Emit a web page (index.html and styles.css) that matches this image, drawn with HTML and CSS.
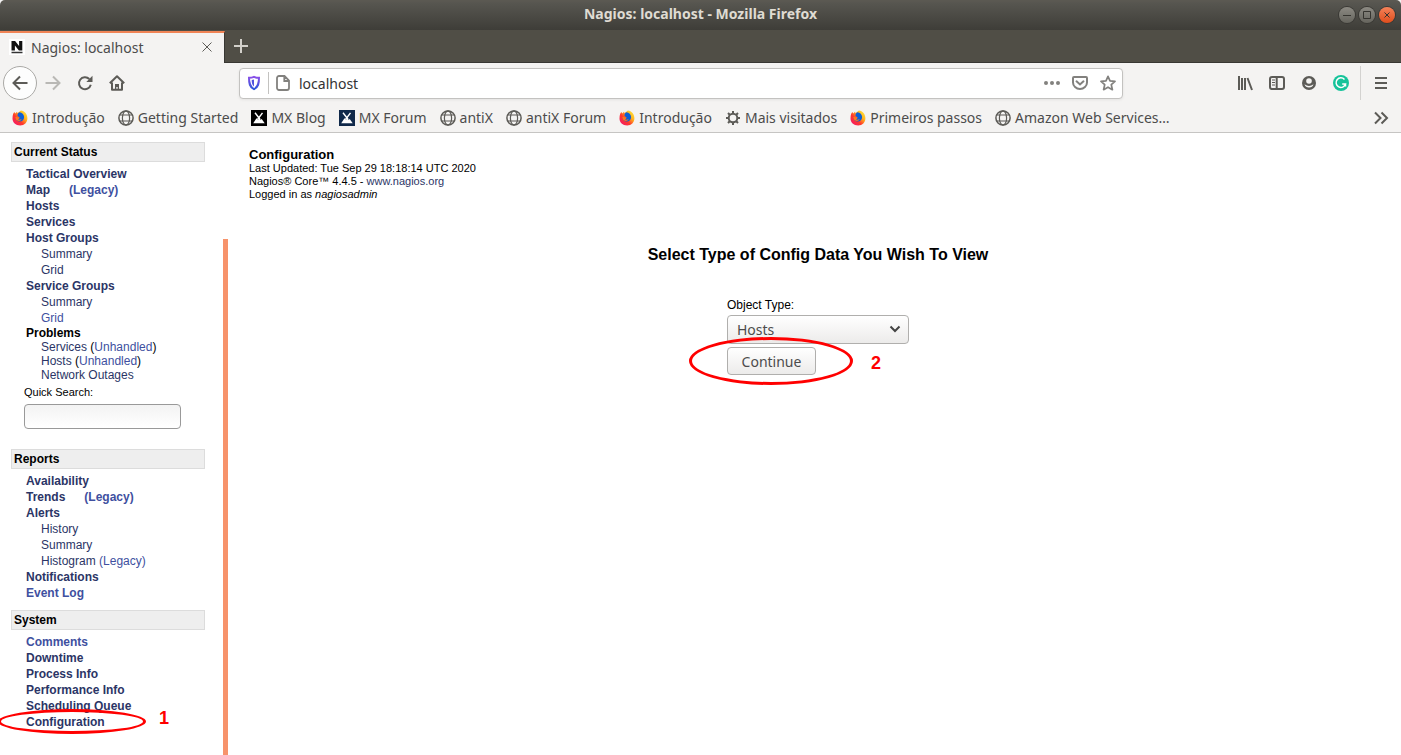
FILE: index.html
```html
<!DOCTYPE html>
<html lang="en">
<head>
<meta charset="utf-8">
<title>Nagios: localhost</title>
<link rel="stylesheet" href="styles.css">
</head>
<body>
<svg class="defs" aria-hidden="true">
  <defs>
    <linearGradient id="fox" x1="1" y1="0" x2="0" y2="1">
      <stop offset="0" stop-color="#fff04a"/><stop offset=".35" stop-color="#ffb21c"/><stop offset=".6" stop-color="#ff3a2b"/><stop offset="1" stop-color="#f0107a"/>
    </linearGradient>
    <linearGradient id="shield" x1="0" y1="0" x2="0" y2="1">
      <stop offset="0" stop-color="#8a4fe8"/><stop offset="1" stop-color="#2a56d8"/>
    </linearGradient>
    <symbol id="globe" viewBox="0 0 16 16">
      <g fill="none" stroke="#5c5b57" stroke-width="1.5"><circle cx="8" cy="8" r="7.1"/><ellipse cx="8" cy="8" rx="3.6" ry="7.1" stroke-width="1.2"/><path d="M1.8 5h12.4M1.8 11h12.4" stroke-width="1.2"/></g>
    </symbol>
    <symbol id="firefox" viewBox="0 0 16 16">
      <path d="M1.2 3.8 2.3 2l1 1.5L5 1.7l.6 1.5C6.7 2.3 8 1 9 .5c2.600.2 6.200 2.600 6.400 7.600.2 4.500-3.200 7.400-7.200 7.400C3.600 15.500.5 12.300.5 8.500c0-1.700.2-3.300.7-4.700z" fill="url(#fox)"/>
      <path d="M7.500 2.300c2.500.1 4.500 2 4.600 4.800.1 2.700-1.900 4.500-4.200 4.500-2.500 0-4.200-1.700-4.200-3.900l2.200.7 1.700-.9-2-1.600c-.3-1.500.4-3 1.900-3.600z" fill="#0b5fd6"/>
      <path d="M3.300 7.200c.9-.6 2-.4 2.500.2l1.900.3c-.2 1-1.300 1-1.700 1.600.9.9 2.600.3 3.700-.2-.7 2.200-4.200 2.800-5.700.5z" fill="#ff7a1a"/>
    </symbol>
    <symbol id="mx" viewBox="0 0 16 16">
      <path d="M4 2.800l5 6.500M11.500 2.800 6.500 9.500" fill="none" stroke="#fff" stroke-width="1.400"/><path d="M2.200 13.300 5.500 8.300l1.500 1.500L8.300 8.500l1.500 1.300.9-.8 3 4.300z" fill="#fff"/>
    </symbol>
  </defs>
</svg>
<header class="browser">
  <div class="titlebar">
    <span class="title">Nagios: localhost - Mozilla Firefox</span>
    <div class="window-buttons">
      <button class="wb" aria-label="Minimize"><svg viewBox="0 0 16 16"><path d="M4 8.500h8"/></svg></button>
      <button class="wb" aria-label="Maximize"><svg viewBox="0 0 16 16"><path d="M4.500 4.500h7v7h-7z"/></svg></button>
      <button class="wb wb-close" aria-label="Close"><svg viewBox="0 0 16 16"><path d="M5.500 5.500l5 5M10.500 5.500l-5 5"/></svg></button>
    </div>
  </div>
  <div class="tabs">
    <div class="tab">
      <svg class="i16" viewBox="0 0 16 16"><path fill="#fff" d="M0 0h16v16H0z"/><path d="M2.500 2h3.600l4 5V2h3.200v9.500h-3.400l-4-5v5H2.500z" fill="#111"/><path d="M2.500 13.500h11" stroke="#333" stroke-width="1.500"/></svg>
      <span class="tab-title">Nagios: localhost</span>
      <button class="plain" aria-label="Close tab"><svg class="i16 line thin" viewBox="0 0 16 16"><path d="M3.500 3.500l9 9M12.500 3.500l-9 9"/></svg></button>
    </div>
    <button class="plain new-tab" aria-label="New tab"><svg class="i16" viewBox="0 0 16 16"><path d="M8 1v14M1 8h14" stroke="#d2d0ca" stroke-width="2"/></svg></button>
  </div>
  <nav class="navbar" aria-label="Navigation">
    <button class="plain back" aria-label="Back"><svg class="i16 line" viewBox="0 0 16 16"><path d="M15.500 8H1.500M8 1.500 1.500 8 8 14.500"/></svg></button>
    <button class="plain" aria-label="Forward"><svg class="i16 line faded" viewBox="0 0 16 16"><path d="M.5 8h14M8 1.500 14.500 8 8 14.500"/></svg></button>
    <button class="plain" aria-label="Reload"><svg class="i16 line" viewBox="0 0 16 16"><path d="M13.800 9.800A6 6 0 1 1 12.300 4"/><path d="M15.500.8V7H9.300z" fill="#5c5b57" stroke="none"/></svg></button>
    <button class="plain" aria-label="Home"><svg class="i16 line" viewBox="0 0 16 16"><path d="M.8 8.300 8 1.300l7.200 7M3 7.500v7.300h10V7.500" stroke-linejoin="round"/><path d="M6 14V9h4v5H8.700v-2H7.300v2z" fill="#5c5b57" stroke="none"/></svg></button>
    <div class="urlbar">
      <svg class="i16" viewBox="0 0 16 16"><path d="M8 1.800c1.600.7 3.300 1 5 1C13 8.500 12.300 12 8 14.200 3.700 12 3 8.500 3 2.800c1.700 0 3.400-.3 5-1z" fill="none" stroke="url(#shield)" stroke-width="2"/><path d="M8 4.500v7c-1.900-1.500-2.300-3.500-2.300-6.400C6.500 5 7.300 4.800 8 4.500z" fill="#5153de"/></svg>
      <span class="url-sep"></span>
      <svg class="i16 line soft" viewBox="0 0 16 16"><path d="M4 1h5.500L14 5.500V13a2 2 0 0 1-2 2H4a2 2 0 0 1-2-2V3a2 2 0 0 1 2-2zM9.300 1.500V6h4.500" stroke-width="1.800"/></svg>
      <input class="url" type="text" value="localhost" aria-label="Address">
      <button class="plain" aria-label="Page actions"><svg class="i16" viewBox="0 0 16 16" fill="#82817e"><circle cx="2" cy="8" r="2"/><circle cx="8" cy="8" r="2"/><circle cx="14" cy="8" r="2"/></svg></button>
      <button class="plain" aria-label="Save to Pocket"><svg class="i16 line soft" viewBox="0 0 16 16"><path d="M2 2h12q1 0 1 1v4.500a7 6.500 0 0 1-14 0V3q0-1 1-1z"/><path d="M4.500 6.300 8 9.500l3.500-3.200" stroke-linecap="round"/></svg></button>
      <button class="plain" aria-label="Bookmark"><svg class="i16 line soft" viewBox="0 0 16 16"><path d="M8 1.300l2 4.600 5 .5-3.700 3.300 1.100 5L8 12.200l-4.400 2.500 1.100-5L1 6.400l5-.5z" stroke-width="1.700" stroke-linejoin="round"/></svg></button>
    </div>
    <div class="tools">
      <button class="plain" aria-label="Library"><svg class="i16 line" viewBox="0 0 16 16"><path d="M2 1v14M5 3v12M8 3v12M10.500 3l4.500 12"/></svg></button>
      <button class="plain" aria-label="Sidebars"><svg class="i16 line" viewBox="0 0 16 16"><rect x="1" y="2" width="14" height="12" rx="2"/><path d="M7.700 2v12"/><path d="M3 5h3M3 7.500h3M3 10h3" stroke-width="1"/></svg></button>
      <button class="plain" aria-label="Account"><svg class="i16" viewBox="0 0 16 16"><circle cx="8" cy="8" r="7" fill="#5c5b57"/><circle cx="8" cy="6" r="2.800" fill="#f4f3f2"/><path d="M3.500 9.200q4.500 3.600 9 0-1 3.300-4.500 3.300t-4.500-3.300z" fill="#f4f3f2"/></svg></button>
      <button class="plain" aria-label="Grammar checker"><svg class="i16" viewBox="0 0 16 16"><circle cx="8" cy="8" r="8" fill="#15c39a"/><path d="M11.500 4.500A4.800 4.800 0 1 0 12.500 9H9.200M12.500 8.500v3" fill="none" stroke="#fff" stroke-width="1.500"/></svg></button>
    </div>
    <button class="plain menu" aria-label="Menu"><svg class="i16 line" viewBox="0 0 16 16"><path d="M2 3h12M2 8h12M2 13h12"/></svg></button>
  </nav>
  <nav class="bookmarks" aria-label="Bookmarks">
    <a href="#"><svg class="i16"><use href="#firefox"/></svg>Introdução</a>
    <a href="#"><svg class="i16"><use href="#globe"/></svg>Getting Started</a>
    <a href="#"><svg class="i16 black"><use href="#mx"/></svg>MX Blog</a>
    <a href="#"><svg class="i16 navy"><use href="#mx"/></svg>MX Forum</a>
    <a href="#"><svg class="i16"><use href="#globe"/></svg>antiX</a>
    <a href="#"><svg class="i16"><use href="#globe"/></svg>antiX Forum</a>
    <a href="#"><svg class="i16"><use href="#firefox"/></svg>Introdução</a>
    <a href="#"><svg class="i16 line" viewBox="0 0 16 16"><circle cx="8" cy="8" r="4.300"/><path d="M8 1v3M8 12v3M1 8h3M12 8h3M3 3l2 2M11 11l2 2M13 3l-2 2M5 11l-2 2"/></svg>Mais visitados</a>
    <a href="#"><svg class="i16"><use href="#firefox"/></svg>Primeiros passos</a>
    <a href="#"><svg class="i16"><use href="#globe"/></svg>Amazon Web Services…</a>
    <button class="plain more" aria-label="More bookmarks"><svg class="i16 line" viewBox="0 0 16 16"><path d="M2 2.500 7.500 8 2 13.500M8.500 2.500 14 8l-5.500 5.500"/></svg></button>
  </nav>
</header>
<div class="page">
  <aside class="sidebar">
    <section class="block status">
      <h2>Current Status</h2>
      <ul class="links">
        <li><a href="#">Tactical Overview</a></li>
        <li><a href="#">Map</a><a class="legacy fresh" href="#">(Legacy)</a></li>
        <li><a href="#">Hosts</a></li>
        <li><a href="#">Services</a></li>
        <li><a href="#">Host Groups</a>
          <ul><li><a href="#">Summary</a></li><li><a href="#">Grid</a></li></ul></li>
        <li><a href="#">Service Groups</a>
          <ul><li><a href="#">Summary</a></li><li><a class="fresh" href="#">Grid</a></li></ul></li>
        <li class="problems">Problems
          <ul><li><a href="#">Services</a> (<a class="fresh" href="#">Unhandled</a>)</li><li><a href="#">Hosts</a> (<a class="fresh" href="#">Unhandled</a>)</li><li><a href="#">Network Outages</a></li></ul></li>
      </ul>
      <form class="search">
        <label for="q">Quick Search:</label>
        <input id="q" type="text">
      </form>
    </section>
    <section class="block reports">
      <h2>Reports</h2>
      <ul class="links">
        <li><a href="#">Availability</a></li>
        <li><a href="#">Trends</a><a class="legacy fresh" href="#">(Legacy)</a></li>
        <li><a href="#">Alerts</a>
          <ul><li><a href="#">History</a></li><li><a href="#">Summary</a></li><li><a href="#">Histogram</a> <a class="fresh" href="#">(Legacy)</a></li></ul></li>
        <li><a href="#">Notifications</a></li>
        <li><a class="fresh" href="#">Event Log</a></li>
      </ul>
    </section>
    <section class="block system">
      <h2>System</h2>
      <ul class="links">
        <li><a class="fresh" href="#">Comments</a></li>
        <li><a href="#">Downtime</a></li>
        <li><a href="#">Process Info</a></li>
        <li><a href="#">Performance Info</a></li>
        <li><a href="#">Scheduling Queue</a></li>
        <li class="marked"><a href="#">Configuration</a><span class="ring ring-one"></span><span class="step step-one">1</span></li>
      </ul>
    </section>
  </aside>
  <div class="divider"></div>
  <main class="main">
    <div class="info">
      <h1>Configuration</h1>
      <p>Last Updated: Tue Sep 29 18:18:14 UTC 2020</p>
      <p>Nagios® Core™ 4.4.5 - <a href="#">www.nagios.org</a></p>
      <p>Logged in as <em>nagiosadmin</em></p>
    </div>
    <h2 class="prompt">Select Type of Config Data You Wish To View</h2>
    <form class="config">
      <label for="type">Object Type:</label>
      <div class="select-wrap">
        <select id="type"><option>Hosts</option></select>
        <svg class="chevron" viewBox="0 0 12 12"><path d="M1.500 3.500 6 8l4.500-4.500" fill="none" stroke="#444" stroke-width="2"/></svg>
      </div>
      <div class="marked">
        <button class="continue" type="button">Continue</button>
        <span class="ring ring-two"></span><span class="step step-two">2</span>
      </div>
    </form>
  </main>
</div>
</body>
</html>
```

FILE: styles.css
```css
* { box-sizing: border-box; }
body { margin: 0; min-height: 100vh; display: flex; flex-direction: column; overflow: hidden; background: #fff; font-family: "Liberation Sans", Arial, sans-serif; color: #000; }
h1, h2, p, ul { margin: 0; padding: 0; }
ul { list-style: none; }
a { text-decoration: none; color: #2b3566; }
.defs { position: absolute; width: 0; height: 0; }
.i16 { width: 16px; height: 16px; flex: none; display: block; }
.line { fill: none; stroke: #5c5b57; stroke-width: 2; }
.thin { stroke-width: 1; }
.faded { stroke: #b9b8b5; }
.soft { stroke: #82817e; }
.plain { border: 0; padding: 0; background: none; display: flex; align-items: center; justify-content: center; flex: none; }

.browser { font-family: "Noto Sans", "Open Sans", sans-serif; font-size: 14px; color: #4c4c4c; background: #f4f3f2; }
.titlebar { height: 30px; display: grid; grid-template-columns: 1fr auto 1fr; align-items: center; background: linear-gradient(#5b5952, #5b5952 1px, #575650 3px, #3e3d38); border-radius: 5px 5px 0 0; color: #dfdbd2; font-weight: 700; line-height: 18px; }
.title { grid-column: 2; padding-bottom: 2px; }
.window-buttons { justify-self: end; display: flex; gap: 4px; padding-right: 6px; }
.wb { width: 16px; height: 16px; padding: 0; border: 0; border-radius: 50%; background: linear-gradient(#8c8a83, #65645d); box-shadow: 0 0 0 1px #3a3935; }
.wb svg { display: block; fill: none; stroke: #35342f; }
.wb-close { background: linear-gradient(#f58259, #df4d1c); }
.tabs { height: 33px; display: flex; padding-top: 1px; background: #504e46; border-bottom: 1px solid #383733; }
.tab { width: 225px; height: 32px; display: flex; align-items: center; gap: 6px; padding: 0 9px 2px; background: #f4f3f2; border-top: 2px solid #f08456; border-right: 1px solid #383733; }
.tab-title { flex: 1; }
.new-tab { width: 32px; padding-bottom: 1px; }
.navbar { height: 40px; display: flex; align-items: center; gap: 16px; padding-left: 3px; }
.back { width: 34px; height: 34px; border: 1px solid #aaa9a6; border-radius: 50%; background: #fdfdfd; }
.back + .plain { margin-left: -8px; }
.urlbar { flex: 1; height: 31px; margin-left: 98px; display: flex; align-items: center; gap: 12px; padding: 0 6px; border: 1px solid #c3c2c0; border-radius: 4px; background: #fff; box-shadow: 0 1px 3px #0001; }
.url-sep { width: 1px; height: 22px; margin: 0 -6px; background: #c3c2c0; }
.url { flex: 1; min-width: 0; margin-left: -4px; padding: 0; border: 0; outline: 0; background: none; font: inherit; color: #333; }
.tools { display: flex; gap: 16px; margin-left: 98px; }
.menu { width: 41px; height: 34px; margin-left: -5px; border-left: 1px solid #d3d2d0; }
.bookmarks { height: 30px; display: flex; align-items: center; gap: 13px; padding: 0 12px; border-bottom: 1px solid #c6c5c3; }
.bookmarks a { display: flex; align-items: center; gap: 4px; color: #4c4c4c; white-space: nowrap; }
.black { background: #000; }
.navy { background: #10294a; }
.more { margin-left: auto; }

.page { flex: 1; display: flex; }
.sidebar { width: 223px; flex: none; padding: 9px 18px 20px 11px; font-size: 12px; }
.block h2 { height: 20px; padding-left: 2px; border: 1px solid #dcdcdc; background: #eee; font-size: 12px; line-height: 18px; }
.links { padding: 4px 0 0 15px; line-height: 16px; font-weight: 700; }
.links ul { padding-left: 15px; font-weight: 400; }
.links .fresh { color: #4050a0; }
.legacy { margin-left: 19px; }
.problems, .problems ul { line-height: 14px; }
.search { display: flex; flex-direction: column; gap: 5px; padding: 3px 24px 0 13px; font-size: 11px; line-height: 14px; }
.search input { height: 25px; border: 1px solid #999; border-radius: 4px; background: linear-gradient(#f3f3f3, #fff); }
.reports { padding-top: 20px; }
.system { padding-top: 9px; }
.divider { width: 5px; flex: none; margin-top: 106px; background: #f7936b; }
.main { flex: 1; padding: 14px 14px 0 21px; }
.info { font-size: 11px; line-height: 13px; }
.info h1 { font-size: 13px; line-height: 15px; }
.prompt { margin-top: 44px; font-size: 16px; line-height: 20px; text-align: center; }
.config { width: 182px; margin: 32px auto 0; font-size: 12px; line-height: 16px; }
.config label { display: block; }
.select-wrap { position: relative; margin-top: 2px; }
.config select, .continue { font-family: "Noto Sans", "Open Sans", sans-serif; font-size: 14px; color: #4c4c4c; border: 1px solid #b0afad; border-radius: 4px; background: linear-gradient(#fff, #ecebea); }
.config select { appearance: none; width: 100%; height: 29px; padding: 0 9px; display: block; }
.chevron { position: absolute; right: 8px; top: 8px; width: 12px; height: 12px; pointer-events: none; }
.continue { width: 89px; height: 28px; padding: 0; display: block; }
.marked { position: relative; }
.config .marked { margin-top: 3px; }
.ring { position: absolute; border: 3px solid #f00; border-radius: 50%; pointer-events: none; }
.ring-one { left: -28px; top: -5px; width: 148px; height: 25px; }
.ring-two { left: -38px; top: -10px; width: 164px; height: 48px; }
.step { position: absolute; color: #f00; font-size: 18px; font-weight: 700; line-height: 20px; }
.step-one { left: 133px; top: -6px; }
.step-two { left: 144px; top: 6px; }
```
